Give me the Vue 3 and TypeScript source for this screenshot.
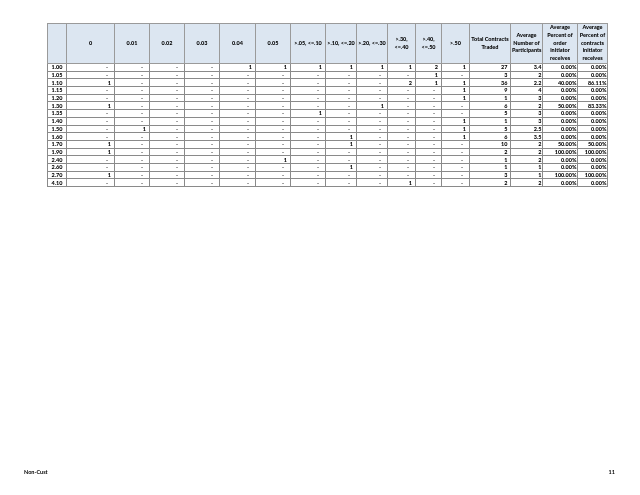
<script setup lang="ts">
const headers: string[] = ['', '0', '0.01', '0.02', '0.03', '0.04', '0.05', '>.05, <=.10', '>.10, <=.20', '>.20, <=.30', '>.30, <=.40', '>.40, <=.50', '>.50', 'Total Contracts Traded', 'Average Number of Participants', 'Average Percent of order initiator receives', 'Average Percent of contracts initiator receives']
const widths: number[] = [19, 48, 35, 35, 35, 36, 35, 35, 31, 31, 28, 26, 28, 41, 32, 35, 30]
const d = '-'
const rows: string[][] = [
  ['1.00', d, d, d, d, '1', '1', '1', '1', '1', '1', '2', '1', '27', '3.4', '0.00%', '0.00%'],
  ['1.05', d, d, d, d, d, d, d, d, d, d, '1', d, '3', '2', '0.00%', '0.00%'],
  ['1.10', '1', d, d, d, d, d, d, d, d, '2', '1', '1', '36', '2.2', '40.00%', '86.11%'],
  ['1.15', d, d, d, d, d, d, d, d, d, d, d, '1', '9', '4', '0.00%', '0.00%'],
  ['1.20', d, d, d, d, d, d, d, d, d, d, d, '1', '1', '3', '0.00%', '0.00%'],
  ['1.30', '1', d, d, d, d, d, d, d, '1', d, d, d, '6', '2', '50.00%', '83.33%'],
  ['1.35', d, d, d, d, d, d, '1', d, d, d, d, d, '5', '3', '0.00%', '0.00%'],
  ['1.40', d, d, d, d, d, d, d, d, d, d, d, '1', '1', '3', '0.00%', '0.00%'],
  ['1.50', d, '1', d, d, d, d, d, d, d, d, d, '1', '5', '2.5', '0.00%', '0.00%'],
  ['1.60', d, d, d, d, d, d, d, '1', d, d, d, '1', '6', '3.5', '0.00%', '0.00%'],
  ['1.70', '1', d, d, d, d, d, d, '1', d, d, d, d, '10', '2', '50.00%', '50.00%'],
  ['1.90', '1', d, d, d, d, d, d, d, d, d, d, d, '2', '2', '100.00%', '100.00%'],
  ['2.40', d, d, d, d, d, '1', d, d, d, d, d, d, '1', '2', '0.00%', '0.00%'],
  ['2.60', d, d, d, d, d, d, d, '1', d, d, d, d, '1', '1', '0.00%', '0.00%'],
  ['2.70', '1', d, d, d, d, d, d, d, d, d, d, d, '3', '1', '100.00%', '100.00%'],
  ['4.10', d, d, d, d, d, d, d, d, d, '1', d, d, '2', '2', '0.00%', '0.00%'],
]
function cellClass(i: number, v: string): string {
  if (i === 0) return 'key'
  if (i >= 14) return 'stat'
  if (i === 13) return 'total'
  return v === '-' ? 'dash' : 'num'
}
</script>

<template>
  <div class="page">
    <table class="grid">
      <colgroup>
        <col v-for="(w, i) in widths" :key="i" :style="{ width: w + 'px' }" />
      </colgroup>
      <thead>
        <tr>
          <th v-for="(h, i) in headers" :key="i">{{ h }}</th>
        </tr>
      </thead>
      <tbody>
        <tr v-for="r in rows" :key="r[0]">
          <td v-for="(v, i) in r" :key="i" :class="cellClass(i, v)">{{ v }}</td>
        </tr>
      </tbody>
    </table>
    <div class="footer">
      <span>Non-Cust</span>
      <span>11</span>
    </div>
  </div>
</template>

<style>
html, body { margin: 0; background: #fff; }
</style>

<style scoped>
.page {
  width: 640px;
  height: 495px;
  box-sizing: border-box;
  padding: 23px 33px 0 47px;
  display: flex;
  flex-direction: column;
  font-family: Lato, "Liberation Sans", sans-serif;
  color: #000;
  overflow: hidden;
  filter: blur(0.25px);
}
.grid {
  border-collapse: collapse;
  table-layout: fixed;
  width: 560px;
  font-size: 5.5px;
  font-weight: 900;
}
th {
  height: 39px;
  padding: 0 1px;
  background: #dce6f1;
  border: 1px solid #9a9a9a;
  text-align: center;
  line-height: 7.7px;
  font-weight: 900;
  color: #000;
}
td {
  height: 6.7px;
  padding: 0 2px;
  border: 1px solid #8a8a8a;
  line-height: 6px;
  white-space: nowrap;
}
.key { text-align: center; }
.num { text-align: right; padding-right: 3px; }
.dash { text-align: right; padding-right: 6px; }
.total { text-align: right; padding-right: 2.5px; }
.stat { text-align: right; padding-right: 0.5px; }
.footer {
  margin-top: 282px;
  margin-right: -8px;
  margin-left: -23px;
  display: flex;
  justify-content: space-between;
  font-size: 5.5px;
  font-weight: 700;
  line-height: 7px;
}
</style>
